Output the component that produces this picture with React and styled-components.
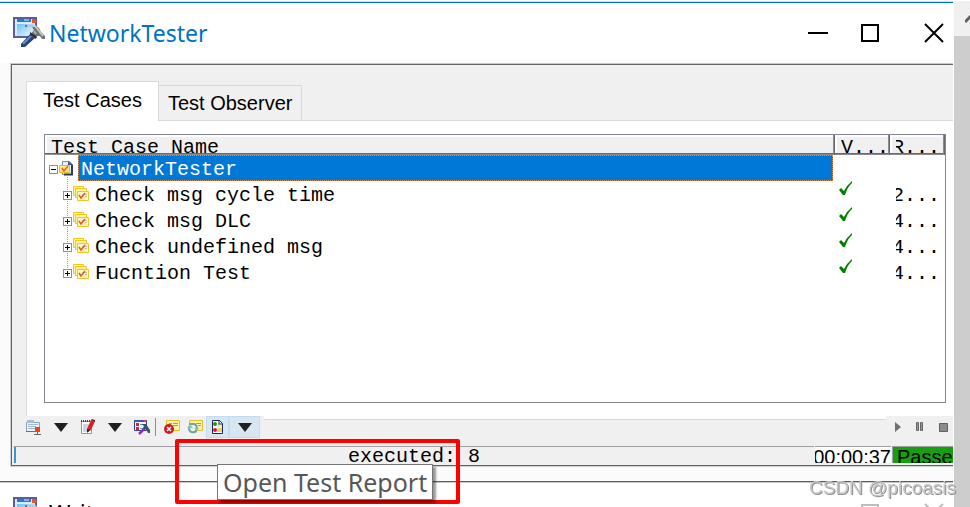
import React from 'react'
import styled, { createGlobalStyle } from 'styled-components'

const GlobalStyle = createGlobalStyle`
  * { box-sizing: border-box; }
  body {
    margin: 0;
    background: #fff;
    color: #000;
    font-family: "Liberation Sans", Arial, sans-serif;
    overflow: hidden;
  }
  button { font: inherit; color: inherit; border: 0; padding: 0; background: none; }
  svg { display: block; }
`

const Screen = styled.div`
  display: flex;
  height: 100vh;
  overflow: hidden;
`

const Desktop = styled.main`
  flex: 1;
  min-width: 0;
  display: flex;
  flex-direction: column;
  border-top: 1px solid #fff;
  border-right: 1px solid #fff;
`

const Window = styled.section`
  flex: none;
  background: #fbfbfb;
  border-top: 1px solid ${({ $next }) => ($next ? '#0078cc' : '#d9d9d9')};
`

const WindowEdge = styled.div`
  height: 1px;
  background: ${({ $next }) => ($next ? '#c8c8c8' : '#0078c8')};
`

const TitleBar = styled.header`
  display: flex;
  align-items: center;
  height: 60px;
  padding: 0 9px 0 13px;
  background: #fff;
`

const Title = styled.h1`
  flex: 1;
  margin: 0 0 0 4px;
  font: 400 23px/32px "Noto Sans", sans-serif;
  color: ${({ $next }) => ($next ? '#000' : '#0072c6')};
`

const WindowButtons = styled.div`
  display: flex;
  gap: 32px;
  color: ${({ $dim }) => ($dim ? '#bdbdbd' : '#000')};
`

const WindowButton = styled.button`
  width: 20px;
  height: 20px;
  margin-right: ${({ $wide }) => ($wide ? '12px' : '0')};
`

const Panel = styled.div`
  position: relative;
  margin-left: 10px;
  margin-bottom: 14px;
  border-top: 1px solid #c8c8c8;
  border-left: 1px solid #d0d0d0;
  border-bottom: 1px solid #d0d0d0;
`

const PanelBody = styled.div`
  border: solid #646464;
  border-width: 1px 0 1px 1px;
  background: #f0f0f0;
  padding-top: 16px;
`

const Tabs = styled.div`
  display: flex;
  align-items: flex-end;
  margin-left: 14px;
`

const Tab = styled.button`
  height: ${({ $active }) => ($active ? '40px' : '36px')};
  padding: ${({ $active }) => ($active ? '0 16px 4px' : '0 9px')};
  font-size: 20px;
  line-height: 34px;
  background: ${({ $active }) => ($active ? '#fff' : '#f0f0f0')};
  border: 1px solid #d9d9d9;
  border-left-width: ${({ $active }) => ($active ? '1px' : '0')};
  border-bottom: ${({ $active }) => ($active ? '0' : '1px solid #d9d9d9')};
`

const TabsRest = styled.div`
  flex: 1;
  border-bottom: 1px solid #d9d9d9;
`

const Page = styled.div`
  margin-left: 14px;
  padding: 13px 7px 13px 17px;
  background: #fff;
  border-left: 1px solid #d9d9d9;
`

const TreeFrame = styled.div`
  height: 269px;
  background: #fff;
  border: 1px solid #828790;
`

const Tree = styled.table`
  width: 100%;
  table-layout: fixed;
  border-collapse: collapse;
  font: 20px/22px "Liberation Mono", "Courier New", monospace;
  text-align: left;
  white-space: nowrap;
`

const HeadCell = styled.th`
  width: ${({ $width }) => $width || 'auto'};
  height: 20px;
  padding: 0;
  font-weight: 400;
  background: #f0f0f0;
  box-shadow: inset -1px 0 #696969, inset -2px -1px #8c8c8c, inset 0 -2px #696969, inset 2px 2px #fff;
`

const HeadText = styled.div`
  height: 18px;
  margin-left: 6px;
  overflow: hidden;
  line-height: 24px;
`

const Cell = styled.td`
  height: 26px;
  padding: 0;
  vertical-align: top;
`

const VerdictMark = styled.div`
  padding-left: 4px;
`

const TreeItem = styled.div`
  display: flex;
  align-items: center;
  height: 26px;
  padding-left: ${({ $child }) => ($child ? '18px' : '4px')};
  background: ${({ $child, $last }) =>
    $child
      ? `repeating-linear-gradient(#999 0 1px, transparent 1px 2px) 22px 0 / 1px ${$last ? '10px' : '26px'} no-repeat`
      : 'repeating-linear-gradient(#999 0 1px, transparent 1px 2px) 22px 22px / 1px 4px no-repeat'};
`

const Expander = styled.button`
  display: flex;
  width: 9px;
  height: 9px;
  margin-top: 2px;
  border: 1px solid #919191;
  background: #fff;
`

const ItemIcon = styled.span`
  flex: none;
  width: ${({ $child }) => ($child ? '18px' : '17px')};
  margin: 0 2px 0 1px;
`

const ItemName = styled.span`
  flex: 1;
  height: 26px;
  padding-left: ${({ $child }) => ($child ? '2px' : '3px')};
  margin-right: 2px;
  line-height: 30px;
  color: ${({ $selected }) => ($selected ? '#fff' : '#000')};
  background: ${({ $selected }) => ($selected ? '#0078d7' : 'transparent')};
  outline: ${({ $selected }) => ($selected ? '1px dotted #e09050' : 'none')};
  outline-offset: -1px;
`

const Clip = styled.div`
  display: flex;
  justify-content: flex-end;
  width: 44px;
  height: ${({ $head }) => ($head ? '18px' : '26px')};
  margin-left: 6px;
  overflow: hidden;
  line-height: ${({ $head }) => ($head ? '24px' : '30px')};
`

const ToolRow = styled.div`
  display: flex;
  align-items: flex-start;
  margin-left: 14px;
`

const Tools = styled.div`
  display: flex;
  align-items: center;
  height: 22px;
  padding: ${({ $right }) => ($right ? '0 0 0 4px' : '0 4px 0 0')};
  background: #f0f0f0;
`

const ToolGap = styled.div`
  flex: 1;
  height: 4px;
  background: #fff;
  border-bottom: 1px solid #d9d9d9;
`

const ToolButton = styled.button`
  display: flex;
  align-items: center;
  justify-content: center;
  width: ${({ $width }) => $width || '27px'};
  height: 22px;
  background: ${({ $hot }) => ($hot ? '#d8e6f2' : 'transparent')};
  box-shadow: ${({ $hot }) => ($hot ? 'inset 0 0 0 1px #c0dcf3' : 'none')};
`

const Divider = styled.div`
  width: 1px;
  height: 18px;
  margin: 0 4px 0 5px;
  background: #8c8c8c;
`

const StatusBar = styled.footer`
  display: flex;
  gap: 1px;
  height: 19px;
  margin-top: 8px;
  padding: 0 0 2px 1px;
  font-size: 20px;
  line-height: 20px;
`

const Progress = styled.div`
  flex: 1;
  padding-left: 334px;
  border-top: 1px solid #a0a0a0;
  box-shadow: inset 2px 0 #3c96d2;
  border-left: 1px solid #f0f0f0;
  overflow: hidden;
  font-family: "Liberation Mono", "Courier New", monospace;
  white-space: pre;
`

const Clock = styled.time`
  display: flex;
  justify-content: flex-end;
  width: 76px;
  border-top: 1px solid #a0a0a0;
  background: #fff;
  overflow: hidden;
`

const Verdict = styled.output`
  width: 61px;
  padding-left: 4px;
  border-top: 1px solid #a0a0a0;
  border-left: 1px solid #a0a0a0;
  background: #16a010;
  overflow: hidden;
`

const Highlight = styled.div`
  position: absolute;
  left: 164px;
  bottom: -38px;
  width: 285px;
  height: 65px;
  border: 4px solid #fe0000;
  border-radius: 2px;
  z-index: 1;
`

const Tooltip = styled.div`
  position: absolute;
  left: 206px;
  bottom: -34px;
  height: 36px;
  padding: 0 5px;
  border: 1px solid #767676;
  background: #fff;
  box-shadow: 3px 3px 2px rgba(0, 0, 0, 0.4);
  color: #575757;
  font: 25px/34px "Noto Sans", sans-serif;
  white-space: nowrap;
  z-index: 2;
`

const ScrollBar = styled.aside`
  display: flex;
  flex-direction: column;
  width: 16px;
  padding-top: 2px;
  background: #f0f0f0;
  border-top: 1px solid #fff;
  overflow: hidden;
`

const ScrollUp = styled.button`
  flex: none;
  height: 33px;
  padding-left: 11px;
`

const ScrollThumb = styled.div`
  flex: 1;
  background: #cdcdcd;
`

const Watermark = styled.div`
  position: fixed;
  right: 14px;
  bottom: 7px;
  font: 19px/24px "Liberation Sans", sans-serif;
  color: #c4c4c4;
  text-shadow: 1px 1px #909090;
  z-index: 3;
`

const AppIcon = () => (
  <svg width="32" height="32" viewBox="0 0 32 32">
    <defs>
      <linearGradient id="screen" x1="0" y1="0" x2="1" y2="1">
        <stop offset="0" stopColor="#6cc0f2" />
        <stop offset="1" stopColor="#f2fbff" />
      </linearGradient>
    </defs>
    <path d="M0 0h24v21H0z" fill="#5c5c98" />
    <path d="M2 2h20v17H2z" fill="#d8ecfa" />
    <path d="M4 2h14v3H4z" fill="#1d7ad6" />
    <path d="M11 2h5v2h-5z" fill="#7ab8ea" />
    <path d="M19 2h4v4h-4z" fill="#f0522a" />
    <path d="M4 7h17v12H4z" fill="url(#screen)" />
    <path d="M8 27L18 16l5 4-11 10H8z" fill="#28407c" />
    <path d="M10 27l9-9" stroke="#5d8cd0" strokeWidth="2" />
    <path d="M12 8h10l4 3 2 4 4 4v3h-3l-2-3h-4l-1 3-5-4 4-5-2-3h-7z" fill="#6f7373" />
    <path d="M14 9h8l4 5 4 5" fill="none" stroke="#c3c8c5" strokeWidth="2" />
    <path d="M17 15l6 4v3l-6-4z" fill="#342c4c" />
    <path d="M21 14l2 3" stroke="#a9adad" strokeWidth="2" />
  </svg>
)

const RootIcon = () => (
  <svg width="15" height="15" viewBox="0 0 15 15">
    <path d="M3.500.5h7l3 3v10h-10z" fill="#e8f0fa" stroke="#7a8eb0" />
    <path d="M9 0l5 4H9z" fill="#42577d" />
    <path d="M13 4v9.500H5" fill="none" stroke="#263b63" strokeWidth="2" />
    <path d="M.5 4.500h10v7H.5z" fill="#ffe98a" stroke="#f0b91e" />
    <path d="M3 7l2 3 4-5" fill="none" stroke="#f05a20" strokeWidth="1.500" />
  </svg>
)

const GroupIcon = () => (
  <svg width="17" height="16" viewBox="0 0 17 16">
    <path d="M.5.5h10v9H.5z" fill="#fff3a6" stroke="#f2c522" />
    <path d="M2.500 2.500h11v9h-11z" fill="#fff3a6" stroke="#f2c522" />
    <path d="M4.500 5.500h11v9h-11z" fill="#fff6bc" stroke="#f2c522" />
    <path d="M9 8.500h5M12 10.500h2" stroke="#b9c0b4" />
    <path d="M6 9l2 3 4-5" fill="none" stroke="#f0502a" strokeWidth="1.500" />
  </svg>
)

const Check = () => (
  <svg width="14" height="15" viewBox="0 0 14 15" role="img" aria-label="passed">
    <path d="M0 9l2-2 3 3Q8 4 12 1l1-1v2Q9 5 6 14H4z" fill="#008000" />
  </svg>
)

const Sign = ({ plus }) => (
  <svg width="7" height="7" viewBox="0 0 7 7">
    <path d={plus ? 'M1 3h5v1H1zM3 1h1v5H3z' : 'M1 3h5v1H1z'} fill="#000" />
  </svg>
)

const Arrow = () => (
  <svg width="14" height="9" viewBox="0 0 14 9">
    <path d="M0 0h14L7 9z" fill="#202020" />
  </svg>
)

const ListIcon = () => (
  <svg width="16" height="16" viewBox="0 0 16 16">
    <path d="M.5 3.500h13v9H.5z" fill="#edf3fa" stroke="#8aa0c0" />
    <path d="M1 1h7v3H1z" fill="#a9bad2" />
    <path d="M2 5.500h10M2 7.500h8M2 9.500h7" stroke="#a5b6cd" />
    <path d="M0 12h9v1H0z" fill="#5c7196" />
    <path d="M9 8h5v5H9z" fill="#f0421c" />
    <path d="M11 13h1v2h3v1H8v-1h3z" fill="#666" />
  </svg>
)

const NotesIcon = () => (
  <svg width="16" height="16" viewBox="0 0 16 16">
    <path d="M1.500 2.500h10v12h-10z" fill="#fff" stroke="#8b98a8" />
    <path d="M1 2h10" stroke="#444" strokeWidth="2" strokeDasharray="1 1" />
    <path d="M3 6h6M3 8h5M3 10h4M3 12h4" stroke="#9cadc2" />
    <path d="M7 10l4-9 4 1-4 9-3 2z" fill="#d92323" />
    <path d="M11 1l1-1 3 1v2z" fill="#7f1f32" />
    <path d="M7 10l3 1-3 3z" fill="#252525" />
  </svg>
)

const ToolsIcon = () => (
  <svg width="16" height="16" viewBox="0 0 16 16">
    <path d="M.5 1.500h12v10H.5z" fill="#eef7ff" stroke="#333e8f" />
    <path d="M0 1h13v2H0z" fill="#4054ba" />
    <path d="M10 1h2v2h-2z" fill="#f43c20" />
    <path d="M2 4h3v3H2zM2 8h3v3H2z" fill="#df2027" />
    <path d="M6 5.500h4M6 9.500h3" stroke="#60a8dc" />
    <path d="M5 15l7-7" stroke="#9a28c0" strokeWidth="2.500" />
    <path d="M7 5h5l2 3 2 3v3h-2l-2-4-2 1-1-2 1-2z" fill="#435066" />
  </svg>
)

const NoteIcon = ({ stop }) => (
  <svg width="16" height="16" viewBox="0 0 16 16">
    <path d="M2.500 1.500h13v10h-13z" fill="#fff3a6" stroke="#e8bf2b" />
    <path d="M5 4.500h3M9 4.500h5M9 6.500h5" stroke="#86a1b5" />
    {stop ? (
      <>
        <circle cx="5" cy="10" r="5" fill="#c91c22" />
        <path d="M3 8l4 4m0-4l-4 4" stroke="#fff" strokeWidth="1.500" />
      </>
    ) : (
      <>
        <path d="M0 5h11v10H0z" fill="#edf4ed" />
        <path d="M2 9c0 5 7 6 8 1M2 5h4c3 0 4 2 4 5" fill="none" stroke="#69a59c" strokeWidth="2" />
        <path d="M0 9h6L3 5zM7 9h5l-2 3z" fill="#8ec1b5" />
      </>
    )}
  </svg>
)

const ReportIcon = () => (
  <svg width="13" height="16" viewBox="0 0 13 16">
    <path d="M1.500 1.500h7l3 3v10h-10z" fill="#fff" stroke="#202458" />
    <path d="M8 1v4h4" fill="none" stroke="#202458" />
    <path d="M6 9h5v4H6z" fill="#f8cc70" />
    <path d="M6 6h5v2H6z" fill="#d8f0c0" />
    <circle cx="4" cy="5" r="2" fill="#159822" />
    <circle cx="4" cy="11" r="2" fill="#df1535" />
    <path d="M7 5.500h2" stroke="#65ba3c" />
  </svg>
)

const PlayIcon = () => (
  <svg width="16" height="10" viewBox="0 0 16 10"><path d="M5 0l6 5-6 5z" fill="#707070" /></svg>
)

const PauseIcon = () => (
  <svg width="8" height="10" viewBox="0 0 8 10"><path d="M.5.5h2v8h-2zM4.500.5h2v8h-2z" fill="#999" stroke="#666" /></svg>
)

const StopIcon = () => (
  <svg width="9" height="9" viewBox="0 0 9 9"><path d="M.5.5h8v8h-8z" fill="#8c8c8c" stroke="#606060" /></svg>
)

const Buttons = ({ dim }) => (
  <WindowButtons $dim={dim}>
    <WindowButton aria-label="Minimize">
      <svg width="20" height="20" viewBox="0 0 20 20"><path d="M0 10h20" stroke="currentColor" strokeWidth="2" /></svg>
    </WindowButton>
    <WindowButton aria-label="Maximize" $wide>
      <svg width="20" height="20" viewBox="0 0 20 20"><path d="M2 2h16v16H2z" fill="none" stroke="currentColor" strokeWidth="2" /></svg>
    </WindowButton>
    <WindowButton aria-label="Close">
      <svg width="20" height="20" viewBox="0 0 20 20"><path d="M1 1l18 18M19 1L1 19" stroke="currentColor" strokeWidth="2" /></svg>
    </WindowButton>
  </WindowButtons>
)

const tests = [
  { name: 'Check msg cycle time', runtime: '2...' },
  { name: 'Check msg DLC', runtime: '4...' },
  { name: 'Check undefined msg', runtime: '4...' },
  { name: 'Fucntion Test', runtime: '4...' },
]

const App = () => {
  return (
    <Screen>
      <GlobalStyle />
      <Desktop>
        <Window>
          <WindowEdge />
          <TitleBar>
            <AppIcon />
            <Title>NetworkTester</Title>
            <Buttons />
          </TitleBar>
          <Panel>
            <PanelBody>
              <Tabs role="tablist">
                <Tab role="tab" aria-selected="true" $active>Test Cases</Tab>
                <Tab role="tab" aria-selected="false">Test Observer</Tab>
                <TabsRest />
              </Tabs>
              <Page>
                <TreeFrame>
                  <Tree>
                    <thead>
                      <tr>
                        <HeadCell><HeadText>Test Case Name</HeadText></HeadCell>
                        <HeadCell $width="55px"><HeadText>V...</HeadText></HeadCell>
                        <HeadCell $width="55px"><Clip $head>R...</Clip></HeadCell>
                      </tr>
                    </thead>
                    <tbody>
                      <tr>
                        <Cell>
                          <TreeItem>
                            <Expander aria-label="Collapse"><Sign /></Expander>
                            <ItemIcon><RootIcon /></ItemIcon>
                            <ItemName $selected>NetworkTester</ItemName>
                          </TreeItem>
                        </Cell>
                        <Cell />
                        <Cell />
                      </tr>
                      {tests.map((test, i) => (
                        <tr key={test.name}>
                          <Cell>
                            <TreeItem $child $last={i === tests.length - 1}>
                              <Expander aria-label="Expand"><Sign plus /></Expander>
                              <ItemIcon $child><GroupIcon /></ItemIcon>
                              <ItemName $child>{test.name}</ItemName>
                            </TreeItem>
                          </Cell>
                          <Cell><VerdictMark><Check /></VerdictMark></Cell>
                          <Cell><Clip>{test.runtime}</Clip></Cell>
                        </tr>
                      ))}
                    </tbody>
                  </Tree>
                </TreeFrame>
              </Page>
              <ToolRow>
                <Tools role="toolbar">
                  <ToolButton $width="16px" aria-label="Test list"><ListIcon /></ToolButton>
                  <ToolButton $width="38px" aria-label="List options"><Arrow /></ToolButton>
                  <ToolButton $width="16px" aria-label="Edit"><NotesIcon /></ToolButton>
                  <ToolButton $width="38px" aria-label="Edit options"><Arrow /></ToolButton>
                  <ToolButton $width="16px" aria-label="Configure"><ToolsIcon /></ToolButton>
                  <Divider />
                  <ToolButton $width="23px" aria-label="Stop on failure"><NoteIcon stop /></ToolButton>
                  <ToolButton $width="23px" aria-label="Repeat"><NoteIcon /></ToolButton>
                  <ToolButton $width="23px" $hot aria-label="Open Test Report"><ReportIcon /></ToolButton>
                  <ToolButton $width="31px" $hot aria-label="Report options"><Arrow /></ToolButton>
                </Tools>
                <ToolGap />
                <Tools $right>
                  <ToolButton $width="16px" aria-label="Start"><PlayIcon /></ToolButton>
                  <ToolButton aria-label="Pause"><PauseIcon /></ToolButton>
                  <ToolButton $width="20px" aria-label="Stop"><StopIcon /></ToolButton>
                </Tools>
              </ToolRow>
              <StatusBar>
                <Progress>executed: 8</Progress>
                <Clock>00:00:37</Clock>
                <Verdict>Passed</Verdict>
              </StatusBar>
            </PanelBody>
            <Highlight />
            <Tooltip role="tooltip">Open Test Report</Tooltip>
          </Panel>
        </Window>
        <Window $next>
          <WindowEdge $next />
          <TitleBar>
            <AppIcon />
            <Title as="h2" $next>Write</Title>
            <Buttons dim />
          </TitleBar>
        </Window>
      </Desktop>
      <ScrollBar>
        <ScrollUp aria-label="Scroll up">
          <svg width="10" height="10" viewBox="0 0 10 10"><path d="M0 7l5-5 5 5" fill="none" stroke="#606060" strokeWidth="3" /></svg>
        </ScrollUp>
        <ScrollThumb />
      </ScrollBar>
      <Watermark>CSDN @picoasis</Watermark>
    </Screen>
  )
}

export default App
